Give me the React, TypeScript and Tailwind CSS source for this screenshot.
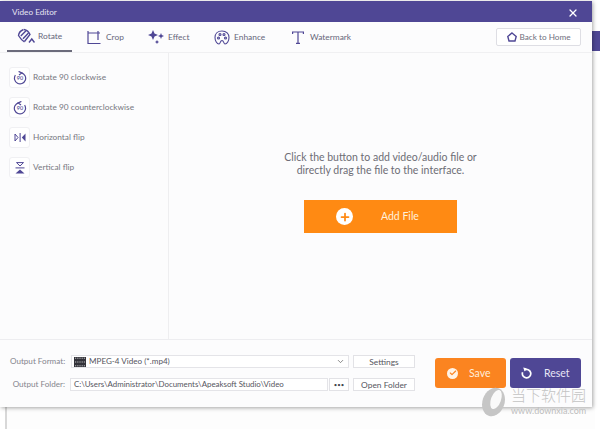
import { Check, ChevronDown, Plus, X } from "lucide-react";

const font = { fontFamily: 'Lato, "Noto Sans CJK SC", sans-serif' };

function RotateTabIcon() {
  return (
    <svg width="18" height="16" viewBox="0 0 18 16" fill="none" stroke="#4f4795" strokeWidth="1.4">
      <path d="M6.5 1.5 C4 2.5 1.8 5 1.5 7.5 C3 10 5 12.5 7.5 14" />
      <path d="M7 1.5 C9.5 2 12 4.2 13 6.5 L7.5 13.5" />
      <path d="M3.8 8 L9 2.8 M6 10.8 L11.5 5" />
      <path d="M12 14.5 L14.8 11 L17.5 14.5" />
    </svg>
  );
}

function CropTabIcon() {
  return (
    <svg width="15" height="15" viewBox="0 0 15 15" fill="none" stroke="#4f4795" strokeWidth="1.2">
      <path d="M1 1 V13.5 H13.5 M1 3 H13 M11 1 V10" />
    </svg>
  );
}

function EffectTabIcon() {
  return (
    <svg width="16" height="14" viewBox="0 0 16 14" fill="#4f4795">
      <path d="M5 0 L6.5 3.5 L10 5 L6.5 6.5 L5 10 L3.5 6.5 L0 5 L3.5 3.5 Z" />
      <path d="M13 3 L13.8 5 L16 6 L13.8 7 L13 9 L12.2 7 L10 6 L12.2 5 Z" />
      <path d="M9 10 L9.7 11.3 L11 12 L9.7 12.7 L9 14 L8.3 12.7 L7 12 L8.3 11.3 Z" />
    </svg>
  );
}

function EnhanceTabIcon() {
  return (
    <svg width="16" height="15" viewBox="0 0 16 15" fill="none" stroke="#4f4795" strokeWidth="1.1">
      <path d="M8 1 C3.5 1 1 4 1 7.5 C1 11 3 14 5 14 C6.5 14 6 10.5 8 10.5 C10 10.5 9.5 14 11 14 C13 14 15 11 15 7.5 C15 4 12.5 1 8 1 Z" />
      <circle cx="4.5" cy="8" r="1" />
      <circle cx="6" cy="4.5" r="1" />
      <circle cx="10" cy="4.5" r="1" />
      <circle cx="11.5" cy="8" r="1" />
    </svg>
  );
}

function WatermarkTabIcon() {
  return (
    <svg width="12" height="13" viewBox="0 0 12 13" fill="none" stroke="#4f4795" strokeWidth="1.2">
      <path d="M0.6 3 V1 H11.4 V3 M6 1 V12.4 M4 12.4 H8" />
    </svg>
  );
}

function HomeIcon() {
  return (
    <svg width="10" height="10" viewBox="0 0 10 10" fill="none" stroke="#4f4795" strokeWidth="1.4">
      <path d="M5 1 L9.2 4.4 L8 9 H2 L0.8 4.4 Z" />
    </svg>
  );
}

function Rotate90Icon({ flip }: { flip?: boolean }) {
  return (
    <svg width="14" height="14" viewBox="0 0 14 14" fill="none" stroke="#4f4795" strokeWidth="1.2">
      <g transform={flip ? "translate(14 0) scale(-1 1)" : undefined}>
        <path d="M8.5 1.9 A5.6 5.6 0 1 1 2.4 4.2" />
        <path d="M5.6 0.4 L8.8 1.9 L6 3.9" />
      </g>
      <text x="7" y="9.4" textAnchor="middle" fontSize="5.5" fill="#4f4795" stroke="none" fontWeight="600">
        90
      </text>
    </svg>
  );
}

function HorizontalFlipIcon() {
  return (
    <svg width="12" height="9" viewBox="0 0 12 9" fill="#4f4795">
      <path d="M1 1 L4 4.5 L1 8 Z" fill="none" stroke="#4f4795" />
      <rect x="5.6" y="0" width="1" height="9" />
      <path d="M11.5 0.5 V8.5 L7.8 4.5 Z" />
    </svg>
  );
}

function VerticalFlipIcon() {
  return (
    <svg width="10" height="12" viewBox="0 0 10 12" fill="#4f4795">
      <path d="M1.5 0.6 H8.5 L5 4 Z" fill="none" stroke="#4f4795" />
      <rect x="0.5" y="5.4" width="9" height="1" />
      <path d="M0.5 11.5 L5 7.6 L9.5 11.5 Z" />
    </svg>
  );
}

function ResetIcon() {
  return (
    <svg width="11" height="12" viewBox="0 0 11 12" fill="none" stroke="#ffffff" strokeWidth="1.7">
      <path d="M3.4 3 A4.2 4.2 0 1 1 1.6 5.2" />
      <path d="M2.2 0.4 L5.6 1.2 L3.6 4.4 Z" fill="#ffffff" stroke="none" />
    </svg>
  );
}

function FormatIcon() {
  return (
    <svg width="12" height="10" viewBox="0 0 12 10" fill="#33333a">
      <rect width="12" height="10" />
      <path d="M1 1.2 H11 M1 5 H11 M1 8.8 H11" stroke="#ffffff" strokeWidth="0.7" strokeDasharray="1 0.8" />
    </svg>
  );
}

const tabs = [
  { label: "Rotate", icon: <RotateTabIcon />, box: "w-[65px] pl-[10px] gap-[3px]" },
  { label: "Crop", icon: <CropTabIcon />, box: "w-[76px] pl-[15px] gap-[4px]" },
  { label: "Effect", icon: <EffectTabIcon />, box: "w-[66px] gap-[4px]" },
  { label: "Enhance", icon: <EnhanceTabIcon />, box: "w-[78px] gap-[4px]" },
  { label: "Watermark", icon: <WatermarkTabIcon />, box: "w-[70px] gap-[6px]" },
];

const actions = [
  { label: "Rotate 90 clockwise", icon: <Rotate90Icon /> },
  { label: "Rotate 90 counterclockwise", icon: <Rotate90Icon flip /> },
  { label: "Horizontal flip", icon: <HorizontalFlipIcon /> },
  { label: "Vertical flip", icon: <VerticalFlipIcon /> },
];

export default function App() {
  return (
    <div style={font} className="relative h-[429px] w-[600px] overflow-hidden bg-white">
      {/* windows behind the editor */}
      <div className="absolute left-[5px] top-[300px] h-[129px] w-[590px] border-l-2 border-[#d8d8d8] bg-[#fdfdfd]" />
      <div className="absolute left-[585px] top-[31px] h-[20px] w-[15px] bg-[#4f4795]" />

      <div className="relative mt-px flex h-[406px] w-[592px] flex-col bg-[#fcfcfd] shadow-[1px_1px_4px_rgba(0,0,0,0.35)]">
        <header className="flex h-[21px] shrink-0 items-center justify-between bg-[#4f4795] pl-[12px] pr-[13px] text-[8.2px] text-[#e6e4f2]">
          <span className="mt-[1px]">Video Editor</span>
          <X size={12} strokeWidth={2.6} className="mt-[3px] text-white" />
        </header>

        <nav className="flex h-[31px] shrink-0 items-center justify-between border-b border-[#f0f0f2] pl-[7px] pr-[11px]">
          <div className="flex h-full items-center">
            {tabs.map((tab, i) => (
              <div
                key={tab.label}
                className={`flex h-full items-center ${tab.box} ${i === 0 ? "border-b-2 border-[#6b6b7b]" : ""} text-[8.4px] text-[#66667a]`}
              >
                {tab.icon}
                <span>{tab.label}</span>
              </div>
            ))}
          </div>
          <button className="flex h-[18px] w-[85px] items-center justify-center gap-[3px] rounded-[2px] border border-[#dedee4] bg-white text-[8.2px] text-[#6f6f7d]">
            <HomeIcon />
            Back to Home
          </button>
        </nav>

        <div className="flex min-h-0 flex-1">
          <aside className="flex w-[169px] shrink-0 flex-col gap-[9px] border-r border-[#eeeef0] pl-[9px] pt-[14px]">
            {actions.map((action) => (
              <div key={action.label} className="flex h-[21px] items-center gap-[3px] text-[8.3px] text-[#77777f]">
                <span className="flex h-[21px] w-[21px] items-center justify-center rounded-[3px] border border-[#f0f0f3] bg-white">
                  {action.icon}
                </span>
                {action.label}
              </div>
            ))}
          </aside>
          <main className="flex flex-1 flex-col items-center pt-[98px]">
            <p className="text-center text-[10.5px] leading-[13px] text-[#6d6d75]">
              Click the button to add video/audio file or
              <br />
              directly drag the file to the interface.
            </p>
            <button className="mt-[23px] flex h-[33px] w-[153px] items-center bg-[#ff8a13] pl-[32px] text-[10.5px] text-[#fff0dc]">
              <span className="flex h-[17px] w-[17px] items-center justify-center rounded-full bg-white">
                <Plus size={12} strokeWidth={3.5} className="text-[#ff8a13]" />
              </span>
              <span className="ml-[28px]">Add File</span>
            </button>
          </main>
        </div>

        <footer className="flex h-[68px] shrink-0 items-start justify-between border-t border-[#ededf0] pl-[10px] pr-[11px] pt-[15px]">
          <div className="flex flex-col gap-[10px] whitespace-nowrap text-[8.1px]">
            <div className="flex items-center">
              <span className="w-[55px] text-right text-[#85858d]">Output Format:</span>
              <div className="ml-[6px] flex h-[13px] w-[278px] items-center justify-between border border-[#e4e4e8] bg-white pl-[2px] pr-[3px] text-[#555560]">
                <span className="flex items-center gap-[3px]">
                  <FormatIcon />
                  MPEG-4 Video (*.mp4)
                </span>
                <ChevronDown size={9} className="text-[#666]" />
              </div>
              <button className="ml-[4px] h-[13px] w-[62px] border border-[#e2e2e6] bg-white text-[8.4px] text-[#55555e]">Settings</button>
            </div>
            <div className="flex items-center">
              <span className="w-[55px] text-right text-[#85858d]">Output Folder:</span>
              <div className="ml-[5px] flex h-[13px] w-[258px] items-center border border-[#e4e4e8] bg-white pl-[3px] text-[7.9px] text-[#555560]">
                C:\Users\Administrator\Documents\Apeaksoft Studio\Video
              </div>
              <button className="ml-[1px] flex h-[13px] w-[20px] items-center justify-center border border-[#e2e2e6] bg-white text-[6px] text-[#44444c]">
                •••
              </button>
              <button className="ml-[4px] h-[13px] w-[62px] border border-[#e2e2e6] bg-white text-[8.4px] text-[#55555e]">Open Folder</button>
            </div>
          </div>
          <div className="mt-[3px] flex gap-[4px]">
            <button className="flex h-[30px] w-[71px] items-center gap-[11px] rounded-[3px] bg-[#fb8420] pl-[12px] text-[10.5px] text-[#ffeeda]">
              <span className="flex h-[11px] w-[11px] items-center justify-center rounded-full bg-[#fff3e6]">
                <Check size={8} strokeWidth={3.5} className="text-[#fb8420]" />
              </span>
              <span className="mt-[1px]">Save</span>
            </button>
            <button className="flex h-[30px] w-[71px] items-center gap-[12px] rounded-[3px] bg-[#4f4795] pl-[11px] text-[10.5px] text-[#e8e6f5]">
              <ResetIcon />
              <span className="mt-[1px]">Reset</span>
            </button>
          </div>
        </footer>
      </div>

      {/* downxia site stamp over the corner */}
      <div className="absolute left-[480px] top-[387px] flex items-start">
        <svg width="28" height="30" viewBox="0 0 28 30">
          <ellipse cx="13.5" cy="15" rx="11" ry="14.5" fill="#c6c6c6" transform="rotate(20 13.5 15)" />
          <ellipse cx="16" cy="12.5" rx="5" ry="10" fill="#fafafa" transform="rotate(20 16 12.5)" />
        </svg>
        <div className="ml-[3px] flex flex-col">
          <span className="text-[15px] font-light leading-[17px] text-[#c4c4c4]">当下软件园</span>
          <span className="mt-[2px] text-[9px] leading-[9px] text-[#bdbdbd]">www.downxia.com</span>
        </div>
      </div>
    </div>
  );
}
